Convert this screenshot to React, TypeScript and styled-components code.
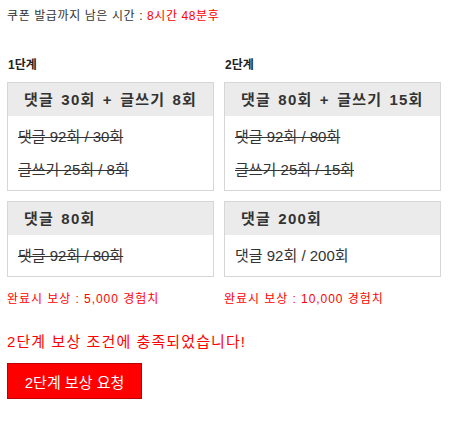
import React from 'react';
import styled, { createGlobalStyle } from 'styled-components';

const GlobalStyle = createGlobalStyle`
  html, body {
    margin: 0;
    padding: 0;
    background: #fff;
  }
  body {
    font-family: "Liberation Sans", "Noto Sans CJK KR", sans-serif;
    color: #333;
  }
`;

interface Mission {
  title: string;
  rows: { text: string; done: boolean }[];
}

interface Stage {
  label: string;
  missions: Mission[];
  reward: string;
}

const stages: Stage[] = [
  {
    label: '1단계',
    missions: [
      {
        title: '댓글 30회 + 글쓰기 8회',
        rows: [
          { text: '댓글 92회 / 30회', done: true },
          { text: '글쓰기 25회 / 8회', done: true },
        ],
      },
      { title: '댓글 80회', rows: [{ text: '댓글 92회 / 80회', done: true }] },
    ],
    reward: '완료시 보상 : 5,000 경험치',
  },
  {
    label: '2단계',
    missions: [
      {
        title: '댓글 80회 + 글쓰기 15회',
        rows: [
          { text: '댓글 92회 / 80회', done: true },
          { text: '글쓰기 25회 / 15회', done: true },
        ],
      },
      { title: '댓글 200회', rows: [{ text: '댓글 92회 / 200회', done: false }] },
    ],
    reward: '완료시 보상 : 10,000 경험치',
  },
];

export default function App() {
  return (
    <S.Page>
      <GlobalStyle />
      <S.Notice>
        쿠폰 발급까지 남은 시간 : <S.Red>8시간 48분후</S.Red>
      </S.Notice>

      <S.Stages>
        {stages.map((stage, i) => (
          <S.Stage key={stage.label} $first={i === 0}>
            <S.Label>{stage.label}</S.Label>
            {stage.missions.map((m) => (
              <S.Box key={m.title}>
                <S.BoxHead>{m.title}</S.BoxHead>
                <S.BoxBody>
                  {m.rows.map((r) => (
                    <S.Row key={r.text} $done={r.done}>
                      {r.text}
                    </S.Row>
                  ))}
                </S.BoxBody>
              </S.Box>
            ))}
            <S.Reward>{stage.reward}</S.Reward>
          </S.Stage>
        ))}
      </S.Stages>

      <S.Message>2단계 보상 조건에 충족되었습니다!</S.Message>
      <S.Button type="button">2단계 보상 요청</S.Button>
    </S.Page>
  );
}

const S = {
  Page: styled.div`
    padding: 8px 8px 20px 7px;
  `,
  Notice: styled.div`
    font-size: 12px;
    line-height: 16px;
    letter-spacing: 0.6px;
    color: #333;
  `,
  Red: styled.span`
    color: #ff0000;
  `,
  Stages: styled.div`
    display: grid;
    grid-template-columns: 217px 217px;
    margin-top: 33px;
  `,
  Stage: styled.div<{ $first: boolean }>`
    padding-right: ${(p) => (p.$first ? '10px' : '0')};
  `,
  Label: styled.div`
    font-size: 12px;
    font-weight: bold;
    line-height: 16px;
    color: #222;
    padding-left: 1px;
    margin-bottom: 9px;
  `,
  Box: styled.div`
    border: 1px solid #d6d6d6;
    & + & {
      margin-top: 10px;
    }
  `,
  BoxHead: styled.div`
    background: #ebebeb;
    height: 33px;
    line-height: 33px;
    padding-left: 16px;
    font-size: 15px;
    font-weight: bold;
    letter-spacing: 1.2px;
    word-spacing: 2px;
    color: #333;
    white-space: nowrap;
  `,
  BoxBody: styled.div`
    padding: 4px 10px;
  `,
  Row: styled.div<{ $done: boolean }>`
    font-size: 15px;
    line-height: 33px;
    color: #333;
    white-space: nowrap;
    text-decoration: ${(p) => (p.$done ? 'line-through' : 'none')};
  `,
  Reward: styled.div`
    margin-top: 14px;
    font-size: 12px;
    line-height: 16px;
    letter-spacing: 0.95px;
    color: #ff0000;
  `,
  Message: styled.div`
    margin-top: 25px;
    font-size: 15px;
    line-height: 20px;
    letter-spacing: 1.1px;
    color: #ff0000;
  `,
  Button: styled.button`
    display: block;
    margin-top: 11px;
    width: 135px;
    height: 36px;
    padding: 0;
    background: #ff0000;
    border: 1px solid #c00000;
    color: #fff;
    font-family: "Liberation Sans", "Noto Sans CJK KR", sans-serif;
    font-size: 15px;
    cursor: pointer;
  `,
};
